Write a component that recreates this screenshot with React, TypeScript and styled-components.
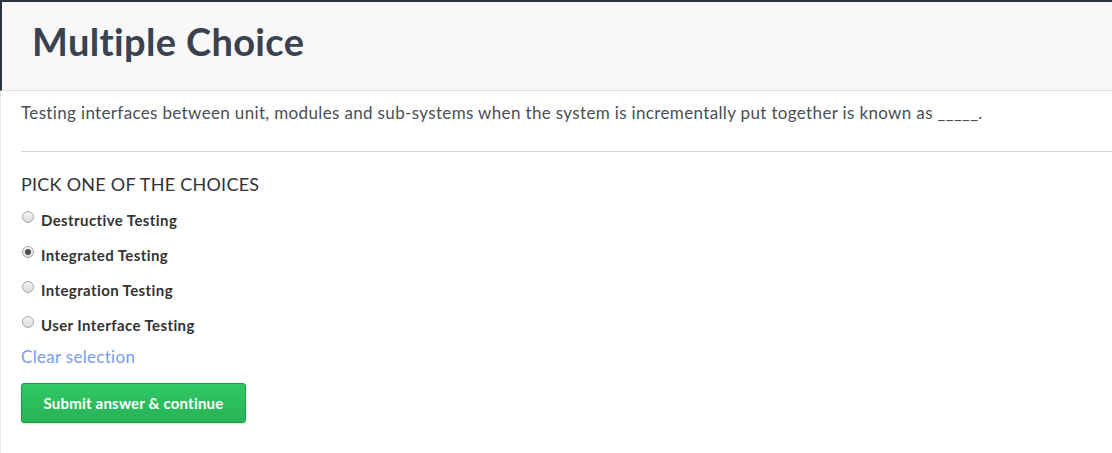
import React, { useState } from "react";
import styled, { createGlobalStyle } from "styled-components";

const GlobalStyle = createGlobalStyle`
  html, body {
    margin: 0;
    padding: 0;
    background: #fff;
  }
  body {
    font-family: Lato, "Open Sans", sans-serif;
    color: #444;
  }
  * { box-sizing: border-box; }
`;

const Page = styled.div`
  width: 1112px;
  min-height: 453px;
  border-top: 2px solid #2b3340;
  display: flex;
  flex-direction: column;
`;

const Header = styled.header`
  height: 89px;
  background: #f8f8f8;
  border-left: 2px solid #2b3340;
  border-bottom: 1px solid #dedede;
  display: flex;
  align-items: center;
  padding: 0 0 10px 30px;
`;

const Title = styled.h1`
  margin: 0;
  font-size: 38px;
  font-weight: 700;
  color: #3a4250;
  letter-spacing: 0.35px;
`;

const Body = styled.main`
  flex: 1;
  border-left: 1px solid #e8e8e8;
  padding: 10px 0 28px 20px;
`;

const Question = styled.p`
  margin: 0;
  font-size: 17px;
  letter-spacing: 0.35px;
  line-height: 24px;
  color: #4a4f57;
  padding-bottom: 26px;
  border-bottom: 1px solid #d6d6d6;
`;

const Prompt = styled.h3`
  margin: 22px 0 16px;
  font-size: 18px;
  letter-spacing: 0.25px;
  font-weight: 400;
  color: #333;
  text-transform: uppercase;
  line-height: 20px;
`;

const Choices = styled.div`
  display: flex;
  flex-direction: column;
  gap: 15px;
`;

const Choice = styled.label`
  display: flex;
  align-items: center;
  height: 20px;
  gap: 7px;
  font-size: 15px;
  letter-spacing: 0.4px;
  font-weight: 700;
  color: #333;
  cursor: pointer;
`;

const Radio = styled.input.attrs({ type: "radio" })`
  appearance: none;
  margin: 0 0 6px 1px;
  width: 12px;
  height: 12px;
  border-radius: 50%;
  border: 1px solid #a9a9a9;
  background: linear-gradient(#f4f4f4, #dcdcdc);
  position: relative;
  &:checked::after {
    content: "";
    position: absolute;
    left: 2px;
    top: 2px;
    width: 6px;
    height: 6px;
    border-radius: 50%;
    background: #4d4d4d;
  }
`;

const ClearLink = styled.a`
  display: inline-block;
  margin-top: 10px;
  font-size: 17px;
  letter-spacing: 0.3px;
  line-height: 24px;
  color: #7a9cf0;
  text-decoration: none;
  cursor: pointer;
`;

const SubmitButton = styled.button`
  display: block;
  margin-top: 14px;
  width: 225px;
  height: 40px;
  border: 1px solid #1f9a46;
  border-radius: 3px;
  background: linear-gradient(#31c865, #27b356);
  box-shadow: 0 1px 2px rgba(0, 0, 0, 0.15);
  color: #fff;
  font-family: Lato, sans-serif;
  font-size: 15px;
  letter-spacing: 0.2px;
  font-weight: 700;
  cursor: pointer;
`;

const options = [
  "Destructive Testing",
  "Integrated Testing",
  "Integration Testing",
  "User Interface Testing",
];

export default function App() {
  const [selected, setSelected] = useState<number | null>(1);

  return (
    <>
      <GlobalStyle />
      <Page>
        <Header>
          <Title>Multiple Choice</Title>
        </Header>
        <Body>
          <Question>
            Testing interfaces between unit, modules and sub-systems when the system is incrementally put together is known as _____.
          </Question>
          <Prompt>Pick one of the choices</Prompt>
          <Choices>
            {options.map((opt, i) => (
              <Choice key={opt}>
                <Radio
                  name="choice"
                  checked={selected === i}
                  onChange={() => setSelected(i)}
                />
                {opt}
              </Choice>
            ))}
          </Choices>
          <ClearLink onClick={() => setSelected(null)}>Clear selection</ClearLink>
          <SubmitButton>Submit answer &amp; continue</SubmitButton>
        </Body>
      </Page>
    </>
  );
}
